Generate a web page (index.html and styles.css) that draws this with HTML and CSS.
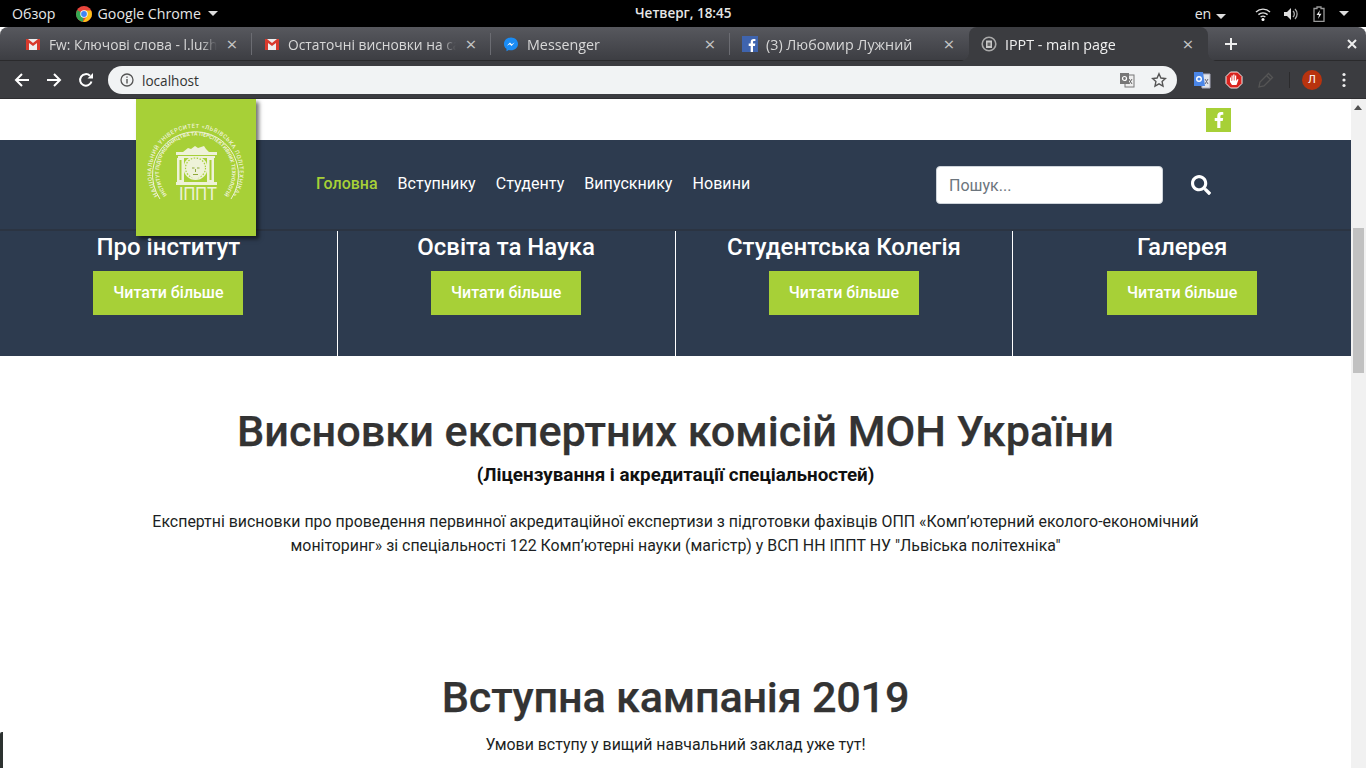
FILE: index.html
```html
<!DOCTYPE html>
<html lang="uk">
<head>
<meta charset="utf-8">
<title>IPPT - main page</title>
<link rel="stylesheet" href="styles.css">
</head>
<body>
<div class="shell">
  <div class="gnome">
    <div class="gnome-left">
      <span class="overview">Обзор</span>
      <span class="appmenu">
        <svg class="chrome-logo" viewBox="0 0 16 16" width="16" height="16"><circle cx="8" cy="8" r="8" fill="#e8453c"/><path d="M8 8 1.100 4 0 8a8 8 0 0 0 7 8z" fill="#34a853"/><path d="M8 4.500h7A8 8 0 0 1 7 16l4-6z" fill="#fbc116"/><circle cx="8" cy="8" r="3.700" fill="#fff"/><circle cx="8" cy="8" r="2.900" fill="#4285f4"/></svg>
        Google Chrome <i class="caret"></i>
      </span>
    </div>
    <div class="clock">Четверг, 18:45</div>
    <div class="gnome-right">
      <span class="lang">en <i class="caret"></i></span>
      <svg class="tray-wifi" viewBox="0 0 16 14" width="16" height="14"><path d="M1 5a10 10 0 0 1 14 0M3.400 7.600a7 7 0 0 1 9.200 0M5.600 10a4 4 0 0 1 4.800 0" fill="none" stroke="#ddd" stroke-width="1.400"/><circle cx="8" cy="12.400" r="1.500" fill="#fff"/></svg>
      <svg class="tray-vol" viewBox="0 0 16 14" width="16" height="14"><path d="M1 5h3l4-4v12l-4-4H1z" fill="#ddd"/><path d="M10 4a4 4 0 0 1 0 6M12 2a7 7 0 0 1 0 10" fill="none" stroke="#aaa" stroke-width="1.300"/></svg>
      <svg class="tray-bat" viewBox="0 0 12 16" width="12" height="16"><path d="M4 1h4v1.500h3v13H1v-13h3z" fill="none" stroke="#999" stroke-width="1.300"/><path d="M7 4 3.500 9H6l-1 4 3.500-5.200H6z" fill="#eee"/></svg>
      <i class="caret caret-end"></i>
    </div>
  </div>

  <div class="tabbar">
    <div class="tab">
      <svg class="fav" viewBox="0 0 16 16" width="16" height="16"><rect x="1" y="3" width="14" height="11" fill="#eee"/><path d="M1 3v11h3V7l4 3 4-3v7h3V3h-2L8 7 3 3z" fill="#d8392c"/></svg>
      <span class="tab-title tab-title-tight">Fw: Ключові слова - l.luzhnyi</span><span class="x">×</span>
    </div>
    <div class="tab">
      <svg class="fav" viewBox="0 0 16 16" width="16" height="16"><rect x="1" y="3" width="14" height="11" fill="#eee"/><path d="M1 3v11h3V7l4 3 4-3v7h3V3h-2L8 7 3 3z" fill="#d8392c"/></svg>
      <span class="tab-title tab-title-tight">Остаточні висновки на сайт</span><span class="x">×</span>
    </div>
    <div class="tab">
      <svg class="fav" viewBox="0 0 16 16" width="16" height="16"><path d="M8 1.500c-3.900 0-7 2.800-7 6.400 0 2 .9 3.700 2.500 4.900v2.400l2.300-1.300c.7.2 1.400.3 2.200.3 3.900 0 7-2.900 7-6.300 0-3.600-3.100-6.400-7-6.400z" fill="#1a8cf5"/><path d="M3.800 9.800 7 6.500l1.700 1.700 3-1.700-3.200 3.400-1.700-1.700z" fill="#fff"/></svg>
      <span class="tab-title">Messenger</span><span class="x">×</span>
    </div>
    <div class="tab">
      <svg class="fav" viewBox="0 0 16 16" width="16" height="16"><rect width="16" height="16" fill="#3f64ae"/><path d="M11 16v-6h2l.3-2.400H11V6.200c0-.7.2-1.100 1.200-1.100h1.200V3h-1.800C9.800 3 8.700 4 8.700 6v1.600H6.700V10h2v6z" fill="#fff"/></svg>
      <span class="tab-title">(3) Любомир Лужний</span><span class="x">×</span>
    </div>
    <div class="tab tab-active">
      <svg class="fav" viewBox="0 0 16 16" width="16" height="16"><circle cx="8" cy="8" r="6.800" fill="none" stroke="#aaa" stroke-width="1.600"/><path d="M5 4.500h6V12H5z" fill="#c8c8c8"/><path d="M6.500 6.500h3v3.500h-3z" fill="#666"/></svg>
      <span class="tab-title">IPPT - main page</span><span class="x">×</span>
    </div>
    <svg class="newtab" viewBox="0 0 12 12" width="12" height="12"><path d="M6 0v12M0 6h12" stroke="#eee" stroke-width="2"/></svg>
    <svg class="winclose" viewBox="0 0 10 10" width="10" height="10"><path d="m1 1 8 8M9 1 1 9" stroke="#eee" stroke-width="2"/></svg>
  </div>

  <div class="toolbar">
    <svg class="nav-ic" viewBox="0 0 16 16" width="16" height="16"><path d="M15 8H2M8 2 2 8l6 6" fill="none" stroke="#fff" stroke-width="2"/></svg>
    <svg class="nav-ic" viewBox="0 0 16 16" width="16" height="16"><path d="M1 8h13M8 2l6 6-6 6" fill="none" stroke="#fff" stroke-width="2"/></svg>
    <svg class="nav-ic" viewBox="0 0 16 16" width="16" height="16"><path d="M13.500 9.500A5.800 5.800 0 1 1 12 3.800" fill="none" stroke="#fff" stroke-width="2"/><path d="M9.500 6.500H15V1z" fill="#fff"/></svg>
    <div class="omnibox">
      <svg class="info" viewBox="0 0 14 14" width="14" height="14"><circle cx="7" cy="7" r="6" fill="none" stroke="#555" stroke-width="1.300"/><path d="M7 6v4.500M7 3.500v1.300" stroke="#555" stroke-width="1.400"/></svg>
      <span class="url">localhost</span>
      <svg class="omni-tr" viewBox="0 0 16 16" width="16" height="16"><rect x="6" y="3" width="9" height="12" fill="#eee" stroke="#777"/><rect x="1" y="1" width="9" height="11" fill="#777"/><circle cx="5.500" cy="6.500" r="2" fill="none" stroke="#fff" stroke-width="1.200"/><path d="m10 7 3 5M13 7l-3 5" stroke="#666"/></svg>
      <svg class="omni-star" viewBox="0 0 16 16" width="16" height="16"><path d="m8 1.800 1.900 4.200 4.500.5-3.300 3.100.9 4.500-4-2.300-4 2.300.9-4.500L1.600 6.500l4.500-.5z" fill="none" stroke="#555" stroke-width="1.400"/></svg>
    </div>
    <svg class="ext ext-first" viewBox="0 0 18 18" width="18" height="18"><path d="M8 3h9v14H9z" fill="#dfe3ea" stroke="#aab"/><path d="M1 1h9l2 14H1z" fill="#4a86e8"/><circle cx="6" cy="8" r="2.300" fill="none" stroke="#fff" stroke-width="1.400"/><path d="m12 8 3 5M15 8l-3 5" stroke="#667"/></svg>
    <svg class="ext" viewBox="0 0 18 18" width="18" height="18"><path d="M5.500 1h7L17 5.500v7L12.500 17h-7L1 12.500v-7z" fill="#d9231e" stroke="#fff" stroke-width=".9"/><path d="M5 11V6.500h1V10h.5V4.500h1.200V9.500h.5V3.500h1.300V9.500h.5V4.500h1.200V10l1.300-2 1 .6L11.500 14h-4.500z" fill="#fff"/></svg>
    <svg class="ext" viewBox="0 0 18 18" width="18" height="18"><path d="m2 16 1-5 8.500-8.500 4 4L7 15z M9.500 4.500l4 4" fill="none" stroke="#555" stroke-width="1.300"/></svg>
    <span class="tb-sep"></span>
    <span class="avatar">Л</span>
    <svg class="menu" viewBox="0 0 4 16" width="4" height="16"><circle cx="2" cy="2.500" r="1.600" fill="#eee"/><circle cx="2" cy="8" r="1.600" fill="#eee"/><circle cx="2" cy="13.500" r="1.600" fill="#eee"/></svg>
  </div>

  <div class="viewport">
    <main class="page">
      <a class="logo">
        <svg viewBox="0 0 120 137" width="120" height="137">
          <defs>
            <path id="arc-out" d="M22.200 96.300A44 44 0 1 1 96.800 96.300"/>
            <path id="arc-in" d="M33.700 98.800A36.500 36.500 0 1 1 85.300 98.800"/>
          </defs>
          <path class="seal-ring" d="M24 100A43 43 0 1 1 95 100"/>
          <text class="seal-t"><textPath href="#arc-out" startOffset="50%" text-anchor="middle">НАЦІОНАЛЬНИЙ УНІВЕРСИТЕТ «ЛЬВІВСЬКА ПОЛІТЕХНІКА»</textPath></text>
          <text class="seal-t seal-b"><textPath href="#arc-in" startOffset="50%" text-anchor="middle">ІНСТИТУТ ПІДПРИЄМНИЦТВА ТА ПЕРСПЕКТИВНИХ ТЕХНОЛОГІЙ</textPath></text>
          <path class="seal-fill" d="M47 53l5-4 3 1 4-3 3 2 6-2 2 3 3 3z"/>
          <path class="seal-fill" d="M40 53h41v3H40z M42 57h37v2H42z"/>
          <path class="seal-fill" d="M41 59h7v24h-7z M71 59h7v24h-7z M40 83h41v3H40z"/>
          <path class="seal-arch" d="M43.500 61h2v20h-2z M73.500 61h2v20h-2z"/>
          <circle class="seal-fill" cx="59.500" cy="69" r="12"/>
          <circle class="seal-wreath" cx="59.500" cy="69" r="10" />
          <ellipse class="seal-fill" cx="59.500" cy="71" rx="7" ry="9"/>
          <path class="seal-face" d="M56 69h2.500M61 69h2.500M59.500 70v3M57 75.500h5"/>
          <text x="62" y="101" class="seal-name" textLength="38" lengthAdjust="spacingAndGlyphs">ІППТ</text>
        </svg>
      </a>
      <div class="topbar">
        <a class="fb-square"><svg viewBox="0 0 320 512" width="10" height="16"><path fill="#fff" d="M279.140 288l14.220-92.660h-88.910v-60.130c0-25.350 12.420-50.060 52.240-50.060h40.420V6.260S260.430 0 225.360 0c-73.220 0-121.080 44.380-121.080 124.720v70.620H22.890V288h81.390v224h100.170V288z"/></svg></a>
      </div>
      <header class="mainbar">
        <nav class="mainnav">
          <a class="navlink navlink-active">Головна</a>
          <a class="navlink">Вступнику</a>
          <a class="navlink">Студенту</a>
          <a class="navlink">Випускнику</a>
          <a class="navlink">Новини</a>
        </nav>
        <div class="search">
          <input class="search-input" type="text" placeholder="Пошук...">
          <svg class="search-ic" viewBox="0 0 512 512" width="20" height="20"><path fill="#fff" d="M505 442.700 405.300 343c-4.500-4.500-10.600-7-17-7H372c27.600-35.300 44-79.700 44-128C416 93.100 322.900 0 208 0S0 93.100 0 208s93.100 208 208 208c48.300 0 92.700-16.400 128-44v16.300c0 6.400 2.500 12.500 7 17l99.700 99.700c9.400 9.400 24.600 9.400 33.900 0l28.300-28.300c9.400-9.400 9.400-24.600.1-34zM208 336c-70.700 0-128-57.200-128-128 0-70.700 57.200-128 128-128 70.700 0 128 57.200 128 128 0 70.700-57.200 128-128 128z"/></svg>
        </div>
      </header>
      <section class="features">
        <div class="feature"><h2>Про інститут</h2><a class="btn">Читати більше</a></div>
        <div class="feature"><h2>Освіта та Наука</h2><a class="btn">Читати більше</a></div>
        <div class="feature"><h2>Студентська Колегія</h2><a class="btn">Читати більше</a></div>
        <div class="feature"><h2>Галерея</h2><a class="btn">Читати більше</a></div>
      </section>
      <section class="block block-first">
        <h1>Висновки експертних комісій МОН України</h1>
        <h3>(Ліцензування і акредитації спеціальностей)</h3>
        <p>Експертні висновки про проведення первинної акредитаційної експертизи з підготовки фахівців ОПП «Комп’ютерний еколого-економічний моніторинг» зі спеціальності 122 Комп’ютерні науки (магістр) у ВСП НН ІППТ НУ "Львіська політехніка"</p>
      </section>
      <section class="block block-second">
        <h1>Вступна кампанія 2019</h1>
        <p>Умови вступу у вищий навчальний заклад уже тут!</p>
      </section>
    </main>
    <div class="scrollbar">
      <i class="sb-up"></i>
      <i class="sb-thumb"></i>
    </div>
    <i class="corner"></i>
  </div>
</div>
</body>
</html>
```

FILE: styles.css
```css
* { box-sizing: border-box; }
html, body { margin: 0; height: 768px; overflow: hidden; }
body { font-family: Roboto, "Noto Sans", sans-serif; background: #fff; }
.shell { display: flex; flex-direction: column; width: 1366px; height: 768px; }

.gnome { height: 27px; background: #000; color: #e6e6e6; display: flex; align-items: center; position: relative; font: 14.200px/27px "Open Sans", "Noto Sans", sans-serif; flex: none; }
.gnome-left { display: flex; align-items: center; padding-left: 12px; }
.overview { margin-right: 20px; }
.appmenu { display: flex; align-items: center; gap: 6px; }
.caret { display: inline-block; width: 0; height: 0; border: 5px solid transparent; border-top-color: #ddd; border-bottom: 0; margin-left: 1px; }
.clock { position: absolute; left: 635px; font-size: 13.500px; font-weight: 600; }
.gnome-right { margin-left: auto; display: flex; align-items: center; padding-right: 17px; }
.lang { margin-right: 29px; }
.tray-vol { margin-left: 12px; }
.tray-bat { margin-left: 14px; }
.caret-end { margin-left: 14px; }

.tabbar { height: 34px; background: linear-gradient(#57585e, #3c3d42); border-radius: 8px 8px 0 0; display: flex; align-items: center; padding-left: 13px; color: #d8d8d8; font: 14.300px "Open Sans", "Noto Sans", sans-serif; flex: none; box-shadow: inset 0 -1px #2a2a2c; }
.tab { width: 239px; height: 34px; display: flex; align-items: center; padding: 0 13px 0 12px; position: relative; }
.tab:not(:nth-child(4)):not(.tab-active)::after { content: ""; position: absolute; right: 0; top: 6px; bottom: 6px; width: 1px; background: #6b6c72; }
.tab-active { background: #3b3c40; border-radius: 8px 8px 0 0; color: #f0f0f0; }
.tab-active::before { content: ""; position: absolute; left: -8px; bottom: 0; width: 8px; height: 8px; background: radial-gradient(circle at 0 0, transparent 7.500px, #3b3c40 8px); }
.tab-active::after { content: ""; position: absolute; right: -8px; bottom: 0; width: 8px; height: 8px; background: radial-gradient(circle at 100% 0, transparent 7.500px, #3b3c40 8px); }
.fav { flex: none; margin-right: 8px; }
.tab-title { flex: 1; overflow: hidden; white-space: nowrap; -webkit-mask-image: linear-gradient(to left, transparent 0, #000 16px); mask-image: linear-gradient(to left, transparent 0, #000 16px); }
.tab-title-tight { font-size: 13.800px; }
.x { flex: none; width: 14px; text-align: center; font-size: 19px; line-height: 20px; color: #c4c4c4; margin-left: 8px; }
.newtab { margin-left: 17px; flex: none; }
.winclose { margin-left: auto; margin-right: 9px; flex: none; }

.toolbar { height: 38px; background: #3b3c40; display: flex; align-items: center; padding: 1px 0 0 14px; flex: none; border-bottom: 1px solid #2e2e31; }
.nav-ic { margin-right: 16px; }
.omnibox { width: 1069px; height: 28px; margin-left: -2px; background: #f1f3f4; border-radius: 14px; display: flex; align-items: center; padding: 0 10px 0 12px; }
.info { margin-right: 8px; }
.url { flex: 1; font: 13.600px "Open Sans", "Noto Sans", sans-serif; color: #333; }
.omni-tr { margin-right: 16px; }
.ext { margin-left: 14px; }
.ext-first { margin-left: 16px; }
.tb-sep { width: 1px; height: 16px; background: #2b2b2d; margin: 0 12px 0 14px; }
.avatar { width: 20px; height: 20px; border-radius: 50%; background: #b8330e; color: #fff; font-size: 11px; text-align: center; line-height: 20px; }
.menu { margin-left: 20px; }

.viewport { flex: 1; display: flex; min-height: 0; position: relative; }
.page { flex: 1; min-width: 0; position: relative; overflow: hidden; background: #fff; }
.scrollbar { width: 15px; background: #f1f1f1; position: relative; flex: none; }
.sb-up { position: absolute; left: 3px; top: 6px; width: 0; height: 0; border: 4px solid transparent; border-bottom: 5px solid #505050; border-top: 0; }
.sb-thumb { position: absolute; left: 2px; top: 129px; width: 11px; height: 145px; background: #c1c1c1; }
.corner { position: absolute; left: 0; bottom: 0; width: 3px; height: 36px; background: #2c3230; border-radius: 2px 0 0 0; }

.logo { position: absolute; left: 136px; top: 0; width: 120px; height: 137px; background: #a7d037; box-shadow: 3px 3px 4px rgba(0,0,0,.55); z-index: 3; }
.logo svg { display: block; }
.seal-t { font: 500 5.800px Roboto, sans-serif; fill: #eef2d8; letter-spacing: .5px; }
.seal-b { font-size: 5.200px; font-weight: 700; letter-spacing: .05px; }
.seal-ring { fill: none; stroke: #eef2d8; stroke-width: 1; }
.seal-fill { fill: #eef2d8; }
.seal-arch { fill: #a7d037; }
.seal-wreath { fill: none; stroke: #a7d037; stroke-width: 1.200; stroke-dasharray: 1.500 1.500; }
.seal-face { fill: none; stroke: #8fa83a; stroke-width: 1; }
.seal-name { font: 400 18.500px "Liberation Sans", sans-serif; fill: #eef2d8; text-anchor: middle; }

.topbar { height: 41px; display: flex; justify-content: flex-end; padding: 9px 120px 0 0; }
.fb-square { width: 25px; height: 24px; background: #a7d037; display: flex; align-items: center; justify-content: center; }

.mainbar { height: 91px; background: #2d3b4f; display: flex; align-items: center; padding: 1px 140px 0 316px; border-bottom: 2px solid #2b3442; }
.mainnav { display: flex; gap: 20px; margin-bottom: 2px; }
.navlink { color: #fff; font-size: 16px; line-height: 24px; letter-spacing: .06px; }
.navlink-active { color: #a7d037; font-weight: 500; letter-spacing: 0; }
.search { margin-left: auto; display: flex; align-items: center; gap: 28px; }
.search-input { width: 227px; height: 38px; border: 1px solid #ced4da; border-radius: 4px; padding: 0 12px; font: 16px Roboto, sans-serif; color: #495057; background: #fff; outline: 0; }
.search-input::placeholder { color: #6c757d; opacity: 1; }
.search-ic { display: block; }

.features { height: 125px; background: #2d3b4f; display: grid; grid-template-columns: repeat(4, 1fr); }
.feature { display: flex; flex-direction: column; align-items: center; border-right: 1px solid #fff; padding-top: 1px; }
.feature:last-child { border-right: 0; }
.feature h2 { margin: 0 0 9px; color: #fff; font-size: 24px; line-height: 29px; font-weight: 500; padding-top: 1px; }
.btn { width: 150px; height: 44px; background: #a7d037; color: #fff; font-size: 16px; font-weight: 500; line-height: 44px; text-align: center; }

.block { text-align: center; padding: 0 140px; color: #212529; }
.block h1 { margin: 0; font-size: 43.200px; line-height: 55px; font-weight: 500; color: #333; -webkit-text-stroke: .25px #333; }
.block h3 { margin: 4px 0 0; font-size: 18.800px; line-height: 24px; font-weight: 700; color: #111; }
.block p { margin: 0; font-size: 15.920px; line-height: 24px; color: #1c1f23; }
.block-first { padding-top: 48px; }
.block-first p { margin-top: 23px; }
.block-second { padding-top: 112px; }
.block-second h1 { letter-spacing: -.22px; }
.block-second p { margin-top: 8px; }
```
